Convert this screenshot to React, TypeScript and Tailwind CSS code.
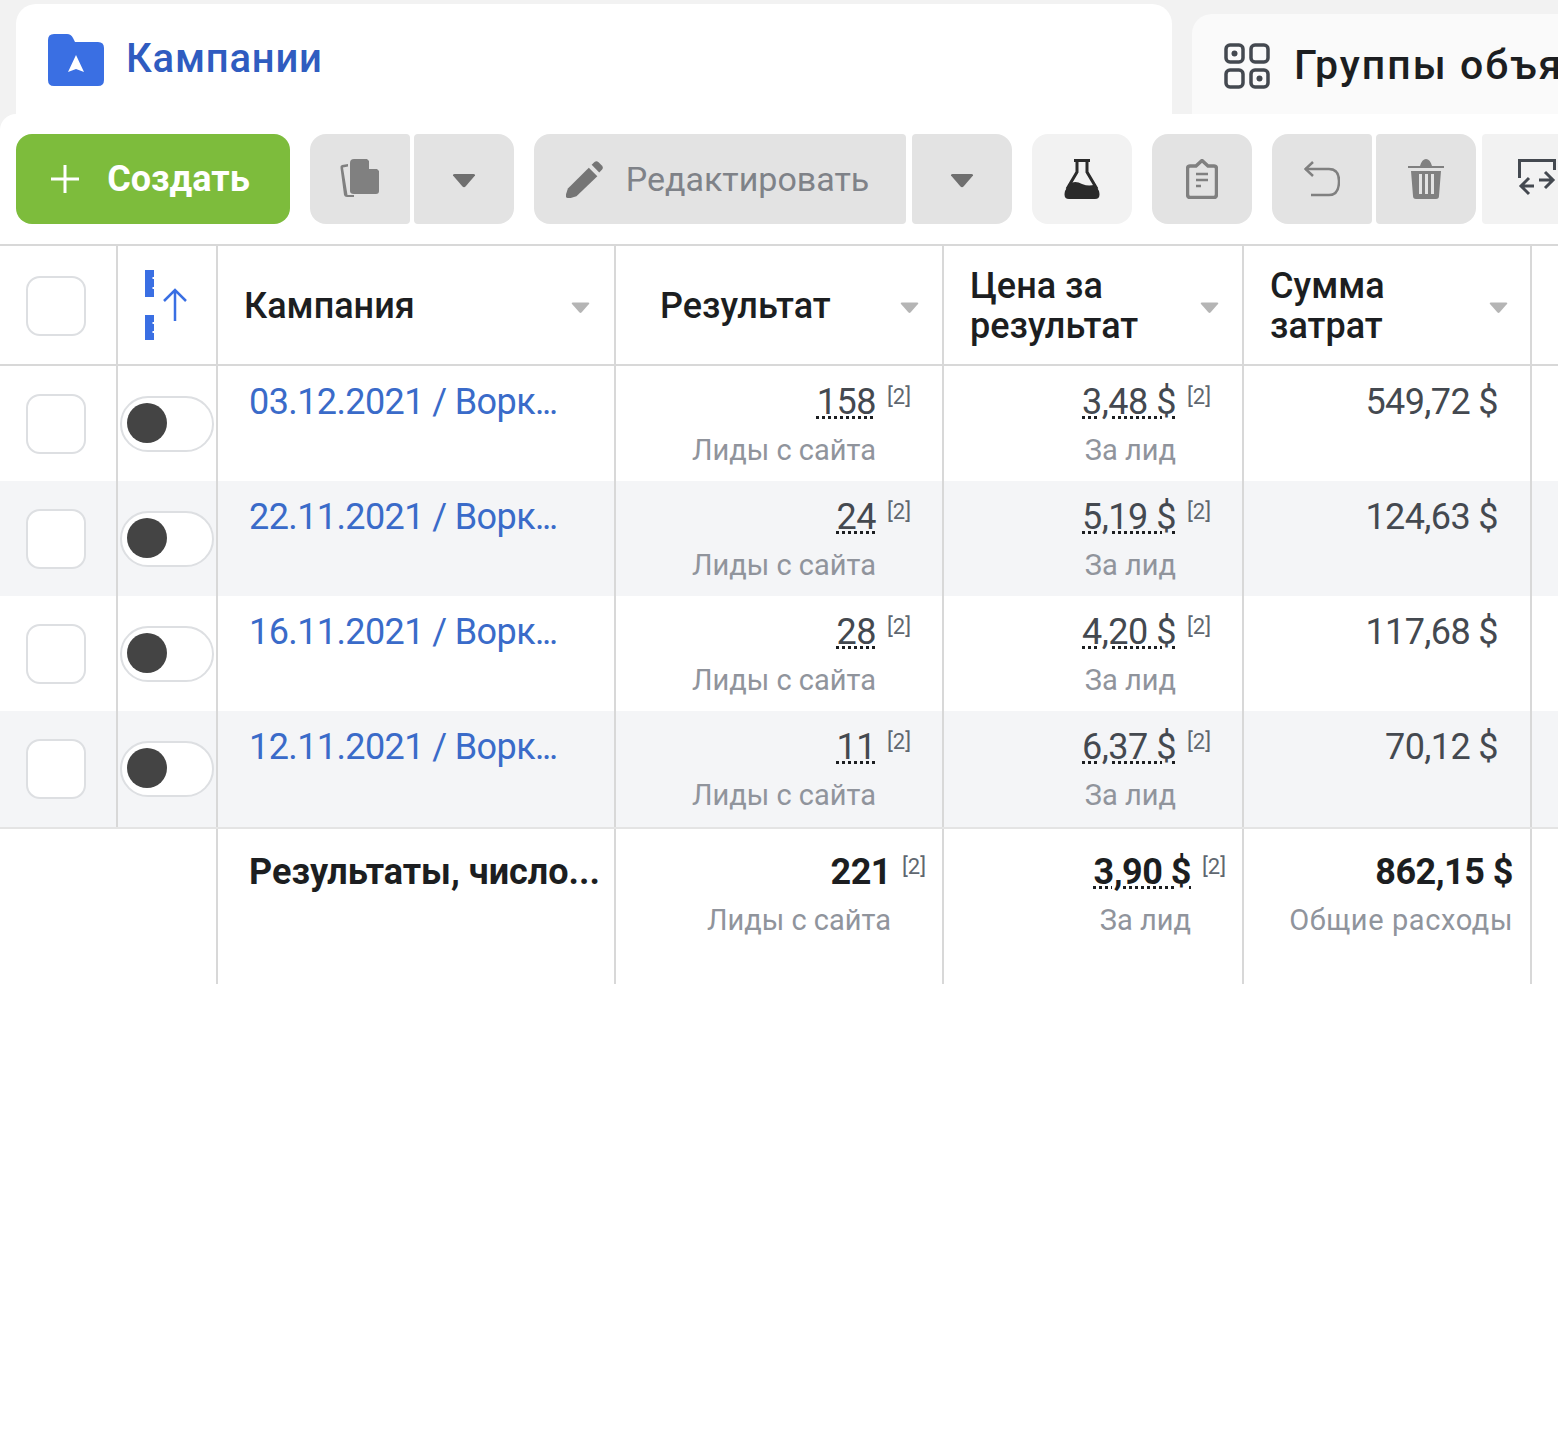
import * as React from 'react';

const cols = "grid grid-cols-[118px_100px_398px_328px_300px_288px_26px]";

interface Row {
    name: string;
    result: string;
    price: string;
    spent: string;
    bg: string;
    height: string;
}

const rows: Row[] = [
    { name: "03.12.2021 / Ворк", result: "158", price: "3,48 $", spent: "549,72 $", bg: "bg-white", height: "h-[115px]" },
    { name: "22.11.2021 / Ворк", result: "24", price: "5,19 $", spent: "124,63 $", bg: "bg-[#f4f5f7]", height: "h-[115px]" },
    { name: "16.11.2021 / Ворк", result: "28", price: "4,20 $", spent: "117,68 $", bg: "bg-white", height: "h-[115px]" },
    { name: "12.11.2021 / Ворк", result: "11", price: "6,37 $", spent: "70,12 $", bg: "bg-[#f4f5f7]", height: "h-[116px]" },
];

function Caret({ className }: { className: string }) {
    return (
        <svg viewBox="0 0 24 14" className={className}>
            <path d="M1 1.5 Q0.5 0 2.5 0 H21.5 Q23.5 0 23 1.5 L13.5 12.5 Q12 14 10.5 12.5 Z" fill="currentColor" />
        </svg>
    );
}

function Checkbox() {
    return <div className="w-[60px] h-[60px] rounded-[14px] border-2 border-[#dddfe2] bg-white" />;
}

function ToolButton({ children, className }: { children: React.ReactNode, className: string }) {
    return <div className={"h-[90px] flex items-center justify-center " + className}>{children}</div>;
}

function Metric({ value, sub, dotted, bold }: { value: string, sub: string, dotted?: boolean, bold?: boolean }) {
    return (
        <div className={"flex flex-col items-end pt-[13px] " + (bold ? "pr-[51px]" : "pr-[66px]")}>
            <div className="relative h-[46px]">
                <span className={"text-[36px] leading-[46px] tracking-[-0.5px] " + (bold ? "font-bold text-[#1c1e21] " : "text-[#444950] ") + (dotted ? "underline decoration-dotted decoration-[3px] decoration-[#1c1e21] underline-offset-[2px]" : "")}>
                    {value}
                </span>
                <span className="absolute left-full ml-[11px] top-[4px] text-[22px] leading-[28px] text-[#606770]">[2]</span>
            </div>
            <div className="mt-[5px] text-[29px] leading-[40px] text-[#90949c]">{sub}</div>
        </div>
    );
}

export default function App() {
    return (
        <div className="w-[1558px] h-[1444px] overflow-hidden bg-white font-['Roboto',sans-serif]">
            <div className="h-[114px] bg-[#f2f2f2] pt-[4px] pl-[16px] flex gap-[20px]">
                <div className="w-[1156px] h-[110px] bg-white rounded-t-[20px] pl-[32px] pt-[30px] flex items-start gap-[22px]">
                    <svg viewBox="0 0 56 52" className="w-[56px] h-[52px]">
                        <path d="M0 6 Q0 0 6 0 H19 Q23 0 25 4 L27 8 H50 Q56 8 56 14 V46 Q56 52 50 52 H6 Q0 52 0 46 Z" fill="#3a6fe3" />
                        <path d="M28 21 L36 38 L28 35 L20 38 Z" fill="#fff" />
                    </svg>
                    <span className="text-[40px] leading-[50px] tracking-[0.8px] font-medium text-[#2f5cc0]">Кампании</span>
                </div>
                <div className="flex-1 mt-[10px] bg-[#fafafa] rounded-tl-[20px] pl-[32px] pt-[28px] flex items-start gap-[24px] whitespace-nowrap overflow-hidden">
                    <svg viewBox="0 0 46 46" className="w-[46px] h-[46px] shrink-0 text-[#444950] mt-[1px]" fill="none" stroke="currentColor" strokeWidth="3.5">
                        <rect x="2" y="2" width="17" height="17" rx="4" />
                        <rect x="27" y="2" width="17" height="17" rx="4" />
                        <rect x="2" y="27" width="17" height="17" rx="4" />
                        <rect x="27" y="27" width="17" height="17" rx="4" />
                        <circle cx="10.5" cy="10.5" r="3" fill="currentColor" stroke="none" />
                        <circle cx="35.5" cy="35.5" r="3" fill="currentColor" stroke="none" />
                    </svg>
                    <span className="text-[41px] leading-[46px] tracking-[2px] font-medium text-[#1c1e21]">Группы объявлений</span>
                </div>
            </div>

            <div className="bg-[#f2f2f2]">
                <div className="bg-white rounded-tl-[16px] pt-[20px] pb-[20px] pl-[16px] flex overflow-hidden">
                    <ToolButton className="w-[274px] shrink-0 bg-[#7dbc3c] rounded-[16px] gap-[28px] pr-[5px]">
                        <svg viewBox="0 0 28 28" className="w-[28px] h-[28px]" stroke="#fff" strokeWidth="3"><path d="M14 0 V28 M0 14 H28" /></svg>
                        <span className="text-[36px] leading-none font-bold text-white">Создать</span>
                    </ToolButton>
                    <ToolButton className="w-[100px] shrink-0 ml-[20px] bg-[#e3e3e3] rounded-l-[16px] rounded-r-[4px]">
                        <svg viewBox="0 0 40 40" className="w-[40px] h-[40px] text-[#808080]">
                            <path d="M8 5 L2 6 Q0 6.500 0.500 9 L4 36 Q4.500 38 7 38 H14 V36 H7.500 L3 8.500 L8 7.500 Z" fill="currentColor" />
                            <path d="M14 0 H27 L39 12 V32 Q39 35 36 35 H14 Q10 35 10 32 V4 Q10 0 14 0 Z" fill="currentColor" />
                            <path d="M29 0 L39 10 H29 Z" fill="#e3e3e3" />
                        </svg>
                    </ToolButton>
                    <ToolButton className="w-[100px] shrink-0 ml-[4px] bg-[#e3e3e3] rounded-r-[16px] rounded-l-[4px]">
                        <Caret className="w-[24px] h-[14px] mt-[3px] text-[#6f6f6f]" />
                    </ToolButton>
                    <ToolButton className="w-[372px] shrink-0 ml-[20px] bg-[#e3e3e3] rounded-l-[16px] rounded-r-[4px] gap-[22px] pr-[5px]">
                        <svg viewBox="0 0 40 40" className="w-[38px] h-[38px] mt-[1px] text-[#757575]">
                            <path d="M2 39 Q-1 39 0 35 L2 29 L24 7 L33 16 L11 37 L5 39 Z" fill="currentColor" />
                            <path d="M27 4 L30 1 Q32 -0.500 34 1 L38 5 Q39.500 7 38 9 L35 12 Z" fill="currentColor" />
                        </svg>
                        <span className="text-[34px] leading-none text-[#7f8288]">Редактировать</span>
                    </ToolButton>
                    <ToolButton className="w-[100px] shrink-0 ml-[6px] bg-[#e3e3e3] rounded-r-[16px] rounded-l-[4px]">
                        <Caret className="w-[24px] h-[14px] mt-[3px] text-[#6f6f6f]" />
                    </ToolButton>
                    <ToolButton className="w-[100px] shrink-0 ml-[20px] bg-[#f2f2f2] rounded-[16px]">
                        <svg viewBox="0 0 36 40" className="w-[36px] h-[40px] text-[#2b2b2b]">
                            <path d="M10 1.500 H26 M13 1.500 V13 L3 30 M23 1.500 V13 L33 30" fill="none" stroke="currentColor" strokeWidth="3" />
                            <path d="M5 25 Q11 21 18 25 Q26 28 31 25 L35 32 Q37 40 31 40 H5 Q-1 40 1 32 Z" fill="currentColor" />
                        </svg>
                    </ToolButton>
                    <ToolButton className="w-[100px] shrink-0 ml-[20px] bg-[#e3e3e3] rounded-[16px]">
                        <svg viewBox="0 0 32 40" className="w-[32px] h-[40px] text-[#808080]" fill="none" stroke="currentColor" strokeWidth="3.500">
                            <path d="M10 7 H4 Q1.500 7 1.500 10 V35 Q1.500 38.500 4 38.500 H28 Q30.500 38.500 30.500 35 V10 Q30.500 7 28 7 H22 L16 1.500 Z" />
                            <path d="M10 15 H22 M10 21 H22 M10 27 H15" strokeWidth="2.500" />
                        </svg>
                    </ToolButton>
                    <ToolButton className="w-[100px] shrink-0 ml-[20px] bg-[#e3e3e3] rounded-l-[16px] rounded-r-[4px]">
                        <svg viewBox="0 0 36 36" className="w-[36px] h-[36px] text-[#808080]" fill="none" stroke="currentColor" strokeWidth="2.500">
                            <path d="M1 8 H25 Q35 8 35 20 Q35 34 25 34 H7" />
                            <path d="M9 1 L1.500 8 L9 15" />
                        </svg>
                    </ToolButton>
                    <ToolButton className="w-[100px] shrink-0 ml-[4px] bg-[#e3e3e3] rounded-r-[16px] rounded-l-[4px]">
                        <svg viewBox="0 0 36 40" className="w-[36px] h-[40px] text-[#808080]">
                            <path d="M0 7 H12 Q14 0 18 0 Q22 0 24 7 H36 V9 H0 Z" fill="currentColor" />
                            <path fillRule="evenodd" d="M3 12 H33 L31 37 Q31 40 28 40 H8 Q5 40 5 37 Z M11 15 V35 H14 V15 Z M17 15 V35 H20 V15 Z M23 15 V35 H26 V15 Z" fill="currentColor" />
                        </svg>
                    </ToolButton>
                    <ToolButton className="w-[90px] shrink-0 ml-[6px] bg-[#f2f2f2] rounded-l-[4px] !justify-start pl-[36px]">
                        <svg viewBox="0 0 38 40" className="w-[38px] h-[40px] shrink-0 text-[#444950]" fill="none" stroke="currentColor" strokeWidth="3">
                            <path d="M1.500 19 V1.500 H36.500 V11" />
                            <path d="M11 19 L3 27 L11 35 M3 27 H16 M21 21 H35 M27 13 L35 21 L27 29" />
                        </svg>
                    </ToolButton>
                </div>
            </div>

            <div className={cols + " h-[122px] border-y-2 border-[#d8d8d8] bg-white"}>
                <div className="flex items-center pl-[26px] pt-[2px] border-r-2 border-[#d8d8d8]"><Checkbox /></div>
                <div className="flex items-center pl-[27px] border-r-2 border-[#d8d8d8]">
                    <svg viewBox="0 0 44 70" className="w-[44px] h-[70px] text-[#3a6fe3]">
                        <path d="M0 0 H9 V7 H7.500 V9 H9 V17 H7.500 V19 H9 V27 H0 Z M0 45 H9 V52 H7.500 V54 H9 V61 H7.500 V63 H9 V70 H0 Z" fill="currentColor" />
                        <path d="M30 20 V51 M19 31 L30 20 L41 31" fill="none" stroke="currentColor" strokeWidth="2.500" />
                    </svg>
                </div>
                <div className="relative flex items-center pl-[26px] pt-[2px] border-r-2 border-[#d8d8d8]">
                    <span className="text-[36px] font-medium text-[#1c1e21]">Кампания</span>
                    <Caret className="absolute right-[24px] top-[56px] w-[19px] h-[12px] text-[#b5b5b5]" />
                </div>
                <div className="relative flex items-center pl-[44px] pt-[2px] border-r-2 border-[#d8d8d8]">
                    <span className="text-[36px] font-medium text-[#1c1e21]">Результат</span>
                    <Caret className="absolute right-[23px] top-[56px] w-[19px] h-[12px] text-[#b5b5b5]" />
                </div>
                <div className="relative flex items-center pl-[26px] pt-[2px] border-r-2 border-[#d8d8d8]">
                    <span className="text-[36px] leading-[40px] font-medium text-[#1c1e21]">Цена за<br />результат</span>
                    <Caret className="absolute right-[23px] top-[56px] w-[19px] h-[12px] text-[#b5b5b5]" />
                </div>
                <div className="relative flex items-center pl-[26px] pt-[2px] border-r-2 border-[#d8d8d8]">
                    <span className="text-[36px] leading-[40px] font-medium text-[#1c1e21]">Сумма<br />затрат</span>
                    <Caret className="absolute right-[22px] top-[56px] w-[19px] h-[12px] text-[#b5b5b5]" />
                </div>
                <div />
            </div>

            {rows.map((row) => (
                <div key={row.name} className={cols + " " + row.height + " " + row.bg}>
                    <div className="flex items-center pl-[26px] border-r-2 border-[#d8d8d8]"><Checkbox /></div>
                    <div className="flex items-center pl-[2px] border-r-2 border-[#d8d8d8]">
                        <div className="w-[94px] h-[56px] rounded-full border-2 border-[#dddfe2] bg-white flex items-center pl-[5px] pb-[2px]">
                            <div className="w-[40px] h-[40px] rounded-full bg-[#444444]" />
                        </div>
                    </div>
                    <div className="pl-[31px] pt-[13px] border-r-2 border-[#d8d8d8]">
                        <span className="text-[36px] leading-[46px] tracking-[-0.6px] text-[#3a6bc9] whitespace-nowrap">
                            {row.name}<span className="tracking-[-2.5px]">...</span>
                        </span>
                    </div>
                    <div className="border-r-2 border-[#d8d8d8]"><Metric value={row.result} sub="Лиды с сайта" dotted /></div>
                    <div className="border-r-2 border-[#d8d8d8]"><Metric value={row.price} sub="За лид" dotted /></div>
                    <div className="border-r-2 border-[#d8d8d8] flex justify-end pr-[32px] pt-[13px]">
                        <span className="text-[36px] leading-[46px] tracking-[-0.6px] text-[#444950]">{row.spent}</span>
                    </div>
                    <div />
                </div>
            ))}

            <div className={cols + " h-[157px] border-t-2 border-[#e4e4e4] bg-white"}>
                <div />
                <div className="border-r-2 border-[#d8d8d8]" />
                <div className="pl-[31px] pt-[20px] border-r-2 border-[#d8d8d8]">
                    <span className="text-[36px] leading-[46px] font-bold text-[#1c1e21] whitespace-nowrap">Результаты, число...</span>
                </div>
                <div className="border-r-2 border-[#d8d8d8] pt-[7px]"><Metric value="221" sub="Лиды с сайта" bold /></div>
                <div className="border-r-2 border-[#d8d8d8] pt-[7px]"><Metric value="3,90 $" sub="За лид" bold dotted /></div>
                <div className="border-r-2 border-[#d8d8d8] flex flex-col items-end pr-[17px] pt-[20px]">
                    <span className="text-[36px] leading-[46px] tracking-[-0.5px] font-bold text-[#1c1e21]">862,15 $</span>
                    <span className="mt-[5px] text-[29px] leading-[40px] tracking-[0.6px] text-[#90949c]">Общие расходы</span>
                </div>
                <div />
            </div>
        </div>
    );
}
